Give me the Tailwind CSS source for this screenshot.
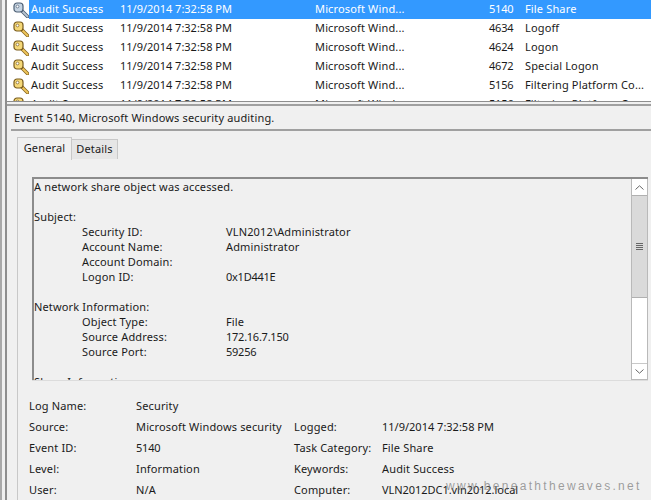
<!DOCTYPE html>
<html><head><meta charset="utf-8"><script src="https://cdn.jsdelivr.net/npm/@tailwindcss/browser@4"></script></head>
<body class="m-0">
<div class="relative w-[651px] h-[500px] overflow-hidden flex bg-[#f0f0f0] text-[#1a1a1a] text-[11px] tracking-[0.15px] font-['Noto_Sans','Open_Sans',sans-serif]">
<svg width="0" height="0" class="absolute"><defs>
<g id="key"><path d="M8.5 8.5 L14.5 14.5" stroke="#8a6a22" stroke-width="3.6" stroke-linecap="round"/><path d="M8.5 8.5 L14.5 14.5" stroke="#f0c65c" stroke-width="1.8" stroke-linecap="round"/><rect x="1" y="1" width="9" height="9" rx="3" fill="#f5d878" stroke="#7a5c1c" stroke-width="1.2"/><circle cx="4.5" cy="4.5" r="1.4" fill="#fff" stroke="#7a5c1c" stroke-width=".7"/></g>
<g id="skey"><path d="M8.5 8.5 L14.5 14.5" stroke="#4d5f74" stroke-width="3.6" stroke-linecap="round"/><path d="M8.5 8.5 L14.5 14.5" stroke="#b8c4d0" stroke-width="1.8" stroke-linecap="round"/><rect x="1" y="1" width="9" height="9" rx="3" fill="#c6d4e2" stroke="#4d5f74" stroke-width="1.2"/><circle cx="4.5" cy="4.5" r="1.4" fill="#fff" stroke="#4d5f74" stroke-width=".7"/></g>
</defs></svg>
<div class="w-[5px] shrink-0 bg-[#f0f0f0] border-l-2 border-[#a9a9a9]"></div>
<div class="w-[2px] shrink-0 bg-[#8e8e8e]"></div>
<div class="flex-1 min-w-0 flex flex-col">
  <div class="h-[102px] shrink-0 overflow-hidden bg-white border-b border-[#8e8e8e]">
    <div class="h-[19px] flex items-center whitespace-nowrap pl-[6px] text-white"><svg class="w-4 h-4 shrink-0" viewBox="0 0 16 16"><use href="#skey"/></svg><div class="flex items-center flex-1 h-full bg-[#3399ff]"><span class="w-[91px] pl-[2px]">Audit Success</span><span class="w-[195px] tracking-normal">11/9/2014 7:32:58 PM</span><span class="w-[174px]">Microsoft Wind...</span><span class="w-[36px] tracking-[-0.2px]">5140</span><span>File Share</span></div></div>
    <div class="h-[19px] flex items-center whitespace-nowrap pl-[6px]"><svg class="w-4 h-4 shrink-0" viewBox="0 0 16 16"><use href="#key"/></svg><div class="flex items-center flex-1"><span class="w-[91px] pl-[2px]">Audit Success</span><span class="w-[195px] tracking-normal">11/9/2014 7:32:58 PM</span><span class="w-[174px]">Microsoft Wind...</span><span class="w-[36px] tracking-[-0.2px]">4634</span><span>Logoff</span></div></div>
    <div class="h-[19px] flex items-center whitespace-nowrap pl-[6px]"><svg class="w-4 h-4 shrink-0" viewBox="0 0 16 16"><use href="#key"/></svg><div class="flex items-center flex-1"><span class="w-[91px] pl-[2px]">Audit Success</span><span class="w-[195px] tracking-normal">11/9/2014 7:32:58 PM</span><span class="w-[174px]">Microsoft Wind...</span><span class="w-[36px] tracking-[-0.2px]">4624</span><span>Logon</span></div></div>
    <div class="h-[19px] flex items-center whitespace-nowrap pl-[6px]"><svg class="w-4 h-4 shrink-0" viewBox="0 0 16 16"><use href="#key"/></svg><div class="flex items-center flex-1"><span class="w-[91px] pl-[2px]">Audit Success</span><span class="w-[195px] tracking-normal">11/9/2014 7:32:58 PM</span><span class="w-[174px]">Microsoft Wind...</span><span class="w-[36px] tracking-[-0.2px]">4672</span><span>Special Logon</span></div></div>
    <div class="h-[19px] flex items-center whitespace-nowrap pl-[6px]"><svg class="w-4 h-4 shrink-0" viewBox="0 0 16 16"><use href="#key"/></svg><div class="flex items-center flex-1"><span class="w-[91px] pl-[2px]">Audit Success</span><span class="w-[195px] tracking-normal">11/9/2014 7:32:58 PM</span><span class="w-[174px]">Microsoft Wind...</span><span class="w-[36px] tracking-[-0.2px]">5156</span><span>Filtering Platform Co...</span></div></div>
    <div class="h-[19px] flex items-center whitespace-nowrap pl-[6px]"><svg class="w-4 h-4 shrink-0" viewBox="0 0 16 16"><use href="#key"/></svg><div class="flex items-center flex-1"><span class="w-[91px] pl-[2px]">Audit Success</span><span class="w-[195px] tracking-normal">11/9/2014 7:32:58 PM</span><span class="w-[174px]">Microsoft Wind...</span><span class="w-[36px] tracking-[-0.2px]">5156</span><span>Filtering Platform Co...</span></div></div>
  </div>
  <div class="h-[4px] shrink-0 bg-[#f0f0f0] border-b-2 border-[#a0a0a0]"></div>
  <div class="h-[23px] shrink-0 flex items-center pl-[7px] pt-[1px]">Event 5140, Microsoft Windows security auditing.</div>
  <div class="h-[2px] shrink-0 bg-[#a0a0a0] ml-[4px]"></div>
  <div class="flex items-end h-[28px] shrink-0 pl-[10px] relative z-10">
    <div class="h-[23px] w-[55px] bg-[#f0f0f0] border border-b-0 border-[#c8c8c8] flex items-center justify-center mb-[-1px] pb-[2px]">General</div>
    <div class="h-[20px] w-[46px] bg-[#e6e6e6] border border-l-0 border-b-0 border-[#c8c8c8] flex items-center justify-center">Details</div>
  </div>
  <div class="flex-1 min-h-0 ml-[10px] border-l border-[#c8c8c8] pl-[14px] pr-[3px] pt-[18px]">
    <div class="h-[203px] relative overflow-hidden border-t-2 border-l-2 border-[#8c8c8c] pt-0 leading-[15px]">
      <div>A network share object was accessed.</div>
      <div class="h-[15px]"></div>
      <div>Subject:</div>
      <div class="grid grid-cols-[144px_1fr] pl-[48px]">
        <span>Security ID:</span><span>VLN2012\Administrator</span>
        <span>Account Name:</span><span>Administrator</span>
        <span>Account Domain:</span><span></span>
        <span>Logon ID:</span><span class="tracking-[-0.25px]">0x1D441E</span>
      </div>
      <div class="h-[15px]"></div>
      <div>Network Information:</div>
      <div class="grid grid-cols-[144px_1fr] pl-[48px]">
        <span>Object Type:</span><span>File</span>
        <span>Source Address:</span><span class="tracking-[-0.25px]">172.16.7.150</span>
        <span>Source Port:</span><span class="tracking-[-0.25px]">59256</span>
      </div>
      <div class="h-[15px]"></div>
      <div>Share Information:</div>
      <div class="absolute right-0 top-0 bottom-0 w-[17px] bg-white border-x border-b border-[#b9b9b9] flex flex-col">
        <div class="h-[16px] flex items-center justify-center shrink-0"><svg width="9" height="5" viewBox="0 0 9 5"><path d="M.5 4.5 L4.5 .8 L8.5 4.5" fill="none" stroke="#666"/></svg></div>
        <div class="h-[103px] shrink-0 bg-[#dadada] border-y border-[#b0b0b0] flex flex-col items-center justify-center gap-[1px]"><i class="block w-[7px] h-[1px] bg-[#666]"></i><i class="block w-[7px] h-[1px] bg-[#666]"></i><i class="block w-[7px] h-[1px] bg-[#666]"></i><i class="block w-[7px] h-[1px] bg-[#666]"></i></div>
        <div class="flex-1"></div>
        <div class="h-[16px] border-t border-[#c8c8c8] flex items-center justify-center shrink-0"><svg width="9" height="5" viewBox="0 0 9 5"><path d="M.5 .5 L4.5 4.2 L8.5 .5" fill="none" stroke="#666"/></svg></div>
      </div>
    </div>
    <div class="h-px bg-[#dcdcdc]"></div>
    <div class="grid grid-cols-[107px_158px_88px_1fr] auto-rows-[21px] items-center mt-[15px] -ml-[3px] whitespace-nowrap">
      <span>Log Name:</span><span class="col-span-3">Security</span>
      <span>Source:</span><span>Microsoft Windows security</span><span>Logged:</span><span class="tracking-normal">11/9/2014 7:32:58 PM</span>
      <span>Event ID:</span><span class="tracking-[-0.2px]">5140</span><span>Task Category:</span><span>File Share</span>
      <span>Level:</span><span>Information</span><span>Keywords:</span><span>Audit Success</span>
      <span>User:</span><span>N/A</span><span>Computer:</span><span class="tracking-[-0.05px]">VLN2012DC1.vln2012.local</span>
    </div>
  </div>
</div>
<div class="absolute left-[446px] top-[477px] text-[12px] tracking-[2.3px] text-[#777]/70 whitespace-nowrap font-['Liberation_Sans',sans-serif]">www.beneaththewaves.net</div>
</div>
</body></html>
